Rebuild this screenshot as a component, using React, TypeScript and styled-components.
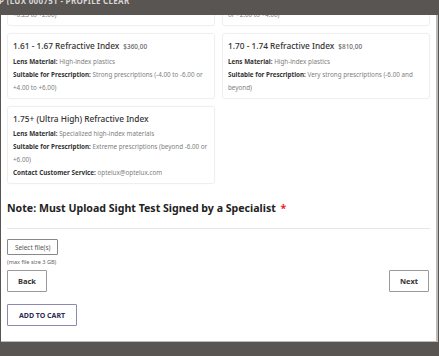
import React, { useEffect, useRef } from 'react';
import styled, { createGlobalStyle } from 'styled-components';

const GlobalStyle = createGlobalStyle`
  html, body {
    margin: 0;
    padding: 0;
    background: #595553;
    font-family: 'Noto Sans', 'Open Sans', sans-serif;
  }
`;

interface ILens {
  title: string;
  price?: string;
  material: string;
  suitable: string;
  contact?: string;
}

const lenses: ILens[] = [
  {
    title: '1.50 Standard Index',
    price: '$0,00',
    material: 'Standard plastics',
    suitable: 'Mild prescriptions (-0.25 to -2.00 or +0.25 to +2.00)',
  },
  {
    title: '1.56 Mid Index',
    price: '$120,00',
    material: 'Mid-index plastics',
    suitable: 'Moderate prescriptions (-2.00 to -4.00 or +2.00 to +4.00)',
  },
  {
    title: '1.61 - 1.67 Refractive Index',
    price: '$360,00',
    material: 'High-index plastics',
    suitable: 'Strong prescriptions (-4.00 to -6.00 or +4.00 to +6.00)',
  },
  {
    title: '1.70 - 1.74 Refractive Index',
    price: '$810,00',
    material: 'High-index plastics',
    suitable: 'Very strong prescriptions (-6.00 and beyond)',
  },
  {
    title: '1.75+ (Ultra High) Refractive Index',
    material: 'Specialized high-index materials',
    suitable: 'Extreme prescriptions (beyond -6.00 or +6.00)',
    contact: 'optelux@optelux.com',
  },
];

export default function App() {
  const bodyRef = useRef<HTMLDivElement>(null);

  useEffect(() => {
    // the dialog is shown scrolled down to the upload step
    if (bodyRef.current) bodyRef.current.scrollTop = bodyRef.current.scrollHeight;
  }, []);

  return (
    <>
      <GlobalStyle />
      <Page>
        <TopBar>
          <TopText>P (LUX 000751 - PROFILE CLEAR</TopText>
        </TopBar>
        <Modal>
          <ModalBody ref={bodyRef}>
            <CardGrid>
              {lenses.map((el, i) => (
                <Card key={i}>
                  <CardTitle>
                    {el.title}
                    {el.price && <Price>{el.price}</Price>}
                  </CardTitle>
                  <Row>
                    <b>Lens Material:</b> {el.material}
                  </Row>
                  <Row>
                    <b>Suitable for Prescription:</b> {el.suitable}
                  </Row>
                  {el.contact && (
                    <Row>
                      <b>Contact Customer Service:</b> {el.contact}
                    </Row>
                  )}
                </Card>
              ))}
            </CardGrid>
            <Note>
              Note: Must Upload Sight Test Signed by a Specialist <Star>*</Star>
            </Note>
            <Divider />
            <FileButton>Select file(s)</FileButton>
            <Hint>(max file size 3 GB)</Hint>
            <NavRow>
              <NavButton>Back</NavButton>
              <NavButton>Next</NavButton>
            </NavRow>
            <CartButton>ADD TO CART</CartButton>
          </ModalBody>
        </Modal>
      </Page>
    </>
  );
}

const Page = styled.div`
  width: 439px;
  height: 356px;
  overflow: hidden;
`;

const TopBar = styled.div`
  height: 5px;
  display: flex;
  align-items: flex-end;
  overflow: hidden;
`;

const TopText = styled.div`
  font-size: 8px;
  line-height: 9px;
  font-weight: 700;
  color: #d8d6d4;
  white-space: nowrap;
  margin-left: -1px;
  letter-spacing: 0.3px;
`;

const Modal = styled.div`
  margin: 10px 0 0 1px;
  width: 435px;
  height: 326px;
  background: #fff;
  border-right: 2px solid #bdbbba;
  border-bottom: 1px solid #bdbbba;
`;

const ModalBody = styled.div`
  height: 100%;
  overflow-y: auto;
  scrollbar-width: none;
  padding: 0 6px 15px 6px;
  box-sizing: border-box;
`;

const CardGrid = styled.div`
  display: grid;
  grid-template-columns: 1fr 1fr;
  gap: 7px;
  padding-top: 7px;
`;

const Card = styled.div`
  border: 1px solid #efefef;
  border-radius: 3px;
  padding: 5px 5px 4px 5px;
  box-shadow: 0 0 2px rgba(0, 0, 0, 0.04);
`;

const CardTitle = styled.div`
  font-size: 8.3px;
  line-height: 14px;
  font-weight: 500;
  color: #333;
  margin-bottom: 1px;
`;

const Price = styled.span`
  font-size: 6.4px;
  color: #666;
  margin-left: 4px;
`;

const Row = styled.div`
  font-size: 6.3px;
  line-height: 13px;
  color: #808080;

  b {
    color: #333;
    font-weight: 700;
  }
`;

const Note = styled.div`
  font-size: 10.6px;
  font-weight: 700;
  color: #222;
  margin-top: 16px;
  line-height: 16px;
`;

const Star = styled.span`
  color: #ee2222;
  margin-left: 2px;
`;

const Divider = styled.div`
  height: 1px;
  background: #e6e6e6;
  margin: 12px 0 10px 0;
`;

const FileButton = styled.button`
  display: block;
  height: 16px;
  padding: 0 7px;
  border: 1px solid #888;
  border-radius: 1px;
  background: #fff;
  font-family: inherit;
  font-size: 6.4px;
  color: #555;
`;

const Hint = styled.div`
  font-size: 5.6px;
  color: #666;
  margin-top: 3px;
  line-height: 8px;
`;

const NavRow = styled.div`
  display: flex;
  justify-content: space-between;
  margin-top: 4px;
  margin-right: 1px;
`;

const NavButton = styled.button`
  height: 22px;
  width: 40px;
  border: 1px solid #999;
  border-radius: 1px;
  background: #fff;
  font-family: inherit;
  font-size: 7.5px;
  font-weight: 700;
  color: #333;
  padding: 0;
`;

const CartButton = styled.button`
  display: block;
  margin-top: 12px;
  height: 22px;
  width: 70px;
  border: 1px solid #8c88b2;
  border-radius: 1px;
  background: #fff;
  font-family: inherit;
  font-size: 7px;
  font-weight: 700;
  color: #2e2b55;
  padding: 0;
`;
